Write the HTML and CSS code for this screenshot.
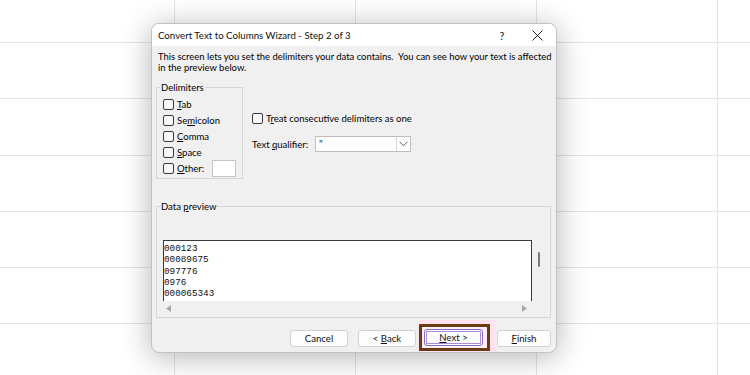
FILE: index.html
```html
<!DOCTYPE html>
<html>
<head>
<meta charset="utf-8">
<link rel="stylesheet" href="styles.css">
</head>
<body>
<div class="sheet">
  <div class="c"></div><div class="c"></div><div class="c"></div><div class="c"></div><div class="c"></div>
  <div class="c"></div><div class="c"></div><div class="c"></div><div class="c"></div><div class="c"></div>
  <div class="c"></div><div class="c"></div><div class="c"></div><div class="c"></div><div class="c"></div>
  <div class="c"></div><div class="c"></div><div class="c"></div><div class="c"></div><div class="c"></div>
  <div class="c"></div><div class="c"></div><div class="c"></div><div class="c"></div><div class="c"></div>
  <div class="c"></div><div class="c"></div><div class="c"></div><div class="c"></div><div class="c"></div>
  <div class="c"></div><div class="c"></div><div class="c"></div><div class="c"></div><div class="c"></div>
</div>

<div class="dialog">
  <div class="titlebar">
    <span class="title">Convert Text to Columns Wizard - Step 2 of 3</span>
    <span class="help">?</span>
    <span class="close"><svg width="11" height="11" viewBox="0 0 11 11"><path d="M0.5 0.5 L10.5 10.5 M10.5 0.5 L0.5 10.5" stroke="#222" stroke-width="1" fill="none"/></svg></span>
  </div>
  <div class="body">
    <p class="desc">This screen lets you set the delimiters your data contains.&nbsp; You can see how your text is affected<br>in the preview below.</p>
    <div class="options">
      <fieldset class="group delims">
        <legend>Delimiters</legend>
        <label class="chk"><span class="box"></span><span><u>T</u>ab</span></label>
        <label class="chk"><span class="box"></span><span>Se<u>m</u>icolon</span></label>
        <label class="chk"><span class="box"></span><span><u>C</u>omma</span></label>
        <label class="chk"><span class="box"></span><span><u>S</u>pace</span></label>
        <label class="chk"><span class="box"></span><span><u>O</u>ther:</span><span class="other"></span></label>
      </fieldset>
      <div class="right">
        <label class="chk"><span class="box"></span><span>T<u>r</u>eat consecutive delimiters as one</span></label>
        <div class="qual">
          <span class="qlabel">Text <u>q</u>ualifier:</span>
          <div class="select">
            <span class="val">"</span>
            <span class="drop"><svg width="9" height="6" viewBox="0 0 9 6"><path d="M0.5 0.8 L4.5 4.8 L8.5 0.8" stroke="#555" stroke-width="1" fill="none"/></svg></span>
          </div>
        </div>
      </div>
    </div>
    <fieldset class="group preview">
      <legend>Data <u>p</u>review</legend>
      <div class="pv">
        <div class="pv-main">
          <pre class="data">000123
00089675
097776
0976
000065343</pre>
          <div class="hscroll">
            <svg width="5" height="7" viewBox="0 0 5 7"><path d="M5 0 L0 3.5 L5 7 Z" fill="#a8a8a8"/></svg>
            <svg width="5" height="7" viewBox="0 0 5 7"><path d="M0 0 L5 3.5 L0 7 Z" fill="#a8a8a8"/></svg>
          </div>
        </div>
        <div class="vscroll"><span class="thumb"></span></div>
      </div>
    </fieldset>
    <div class="buttons">
      <button class="btn cancel">Cancel</button>
      <button class="btn back">&lt; <u>B</u>ack</button>
      <div class="hl"><div class="frame"><button class="btn focus"><u>N</u>ext &gt;</button></div></div>
      <button class="btn finish"><u>F</u>inish</button>
    </div>
  </div>
</div>
</body>
</html>
```

FILE: styles.css
```css
* { box-sizing: border-box; }
html, body { margin: 0; padding: 0; }
body {
  width: 750px;
  height: 375px;
  overflow: hidden;
  position: relative;
  background: #fff;
  font-family: Lato, "Noto Sans", sans-serif;
  color: #111;
}

.sheet {
  display: grid;
  grid-template-columns: 174px 180px 180px 180px 1fr;
  grid-template-rows: 42px 55px 56px 55px 55px 55px 1fr;
  gap: 1px;
  background: #e4e4e4;
  width: 750px;
  height: 375px;
}
.c { background: #fff; }

.dialog {
  position: absolute;
  left: 151px;
  top: 23px;
  width: 406px;
  height: 330px;
  border: 1px solid #c2c2c2;
  border-radius: 8px;
  background: #f0f0f0;
  box-shadow: 0 4px 30px rgba(0, 0, 0, 0.3);
  overflow: hidden;
  display: flex;
  flex-direction: column;
}

.titlebar {
  flex: none;
  height: 22px;
  background: #fff;
  display: flex;
  align-items: center;
  padding-left: 6px;
  padding-right: 5px;
}
.title { flex: 1; font-size: 9.7px; color: #111; white-space: nowrap; }
.help { width: 20px; text-align: center; font-size: 11px; margin-right: 11px; color: #222; }
.close { width: 28px; display: flex; justify-content: center; align-items: center; }

.body {
  flex: 1;
  padding: 5px 5px 0 4px;
  font-size: 9.4px;
}
.desc {
  margin: 0 0 0 2px;
  height: 22px;
  line-height: 11px;
  font-size: 9.45px;
  color: #000;
  white-space: nowrap;
}

.options {
  display: flex;
  margin-top: 9px;
}

.group {
  margin: 0;
  border: 1px solid #d6d6d6;
  min-width: 0;
}
.group legend {
  padding: 0 1px;
  margin-left: -3px;
  font-size: 9.5px;
  line-height: 11px;
  color: #000;
}

.delims {
  width: 87px;
  height: 97px;
  padding: 3px 0 0 6px;
}

.chk {
  display: flex;
  align-items: center;
  height: 16px;
  gap: 3px;
  font-size: 9.5px;
  color: #000;
  white-space: nowrap;
}
.box {
  width: 11px;
  height: 11px;
  border: 1px solid #3a3a3a;
  border-radius: 2px;
  background: #f7f7f7;
  flex: none;
}
.other {
  width: 24px;
  height: 17px;
  border: 1px solid #c4c4c4;
  background: #fff;
  margin-left: 5px;
}

.right {
  margin-left: 9px;
  padding-top: 28px;
}
.qual {
  display: flex;
  align-items: center;
  margin-top: 10px;
}
.qlabel { width: 63px; color: #000; white-space: nowrap; font-size: 9.5px; }
.select {
  width: 96px;
  height: 16px;
  border: 1px solid #bdbdbd;
  background: #fff;
  display: flex;
}
.val { flex: 1; padding-left: 3px; line-height: 13px; font-size: 10px; }
.drop {
  width: 14px;
  border-left: 1px solid #d4d4d4;
  display: flex;
  align-items: center;
  justify-content: center;
}

.preview {
  width: 395px;
  height: 117px;
  margin-top: 22px;
  padding: 28px 0 0 6px;
}
.pv {
  display: flex;
  width: 386px;
  height: 75px;
}
.pv-main {
  width: 369px;
  display: flex;
  flex-direction: column;
}
.data {
  margin: 0;
  height: 61px;
  overflow: hidden;
  background: #fff;
  border-top: 1px solid #3a3a3a;
  border-left: 1px solid #3a3a3a;
  border-right: 1px solid #3a3a3a;
  padding: 2px 0 0 0;
  font-family: "Liberation Mono", monospace;
  font-size: 9.3px;
  line-height: 11.3px;
  color: #111;
}
.hscroll {
  height: 14px;
  display: flex;
  align-items: center;
  justify-content: space-between;
  padding: 0 5px 0 3px;
}
.vscroll {
  width: 17px;
  padding: 12px 0 0 6px;
}
.thumb {
  display: block;
  width: 2px;
  height: 15px;
  background: #7a7a7a;
  border-radius: 1px;
}

.buttons {
  display: flex;
  justify-content: flex-end;
  align-items: flex-start;
  height: 17px;
  margin-top: 12px;
}
.btn {
  width: 58px;
  height: 17px;
  padding: 0;
  border: 1px solid #d2d2d2;
  border-radius: 3px;
  background: #fdfdfd;
  font-family: Lato, "Noto Sans", sans-serif;
  font-size: 9.6px;
  line-height: 14px;
  color: #111;
}
.cancel { margin-right: 10px; }
.back { margin-right: 1px; }
.hl {
  width: 78px;
  height: 32px;
  margin-top: -10px;
  margin-right: 2px;
  padding: 4px 5px 1px 2px;
  background: #fce3ef;
}
.frame {
  width: 71px;
  height: 27px;
  border: 3px solid #6a3a12;
  padding: 2px 4px 2px 2px;
  background: #fcf0f6;
}
.focus {
  width: 59px;
  border: 1px solid #8d6ac0;
  box-shadow: inset 0 0 0 1px #fff, inset 0 0 0 2px #a98cd8;
}
.finish { width: 54px; }
```
